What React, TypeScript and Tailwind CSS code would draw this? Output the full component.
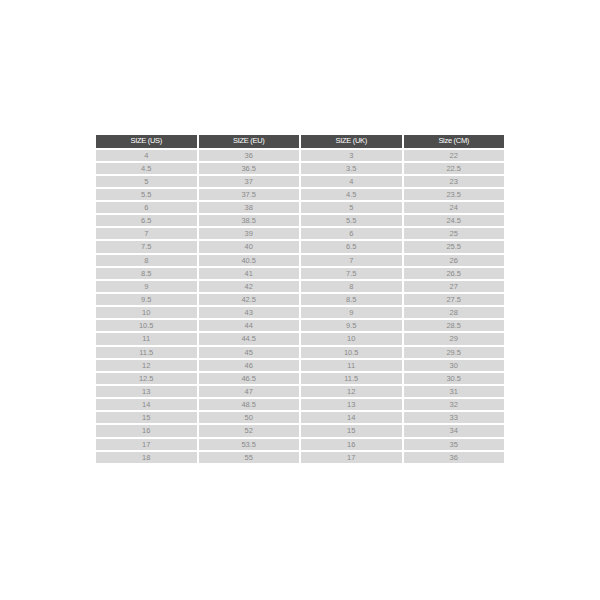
const headers = ["SIZE (US)", "SIZE (EU)", "SIZE (UK)", "Size (CM)"];

const rows: string[][] = [
    ["4", "36", "3", "22"],
    ["4.5", "36.5", "3.5", "22.5"],
    ["5", "37", "4", "23"],
    ["5.5", "37.5", "4.5", "23.5"],
    ["6", "38", "5", "24"],
    ["6.5", "38.5", "5.5", "24.5"],
    ["7", "39", "6", "25"],
    ["7.5", "40", "6.5", "25.5"],
    ["8", "40.5", "7", "26"],
    ["8.5", "41", "7.5", "26.5"],
    ["9", "42", "8", "27"],
    ["9.5", "42.5", "8.5", "27.5"],
    ["10", "43", "9", "28"],
    ["10.5", "44", "9.5", "28.5"],
    ["11", "44.5", "10", "29"],
    ["11.5", "45", "10.5", "29.5"],
    ["12", "46", "11", "30"],
    ["12.5", "46.5", "11.5", "30.5"],
    ["13", "47", "12", "31"],
    ["14", "48.5", "13", "32"],
    ["15", "50", "14", "33"],
    ["16", "52", "15", "34"],
    ["17", "53.5", "16", "35"],
    ["18", "55", "17", "36"],
];

export default function App() {
    return (
        <div className="w-[600px] h-[600px] bg-white pt-[135px] pl-[96px] font-['Liberation_Sans',Arial,sans-serif]">
            <div className="w-[408px] flex flex-col gap-[2px]">
                <div className="grid grid-cols-4 gap-[2px]">
                    {headers.map(h => (
                        <div
                            key={h}
                            className="h-[12.5px] bg-[#4d4d4d] text-white text-[7.5px] leading-[12.5px] text-center tracking-[-0.3px]"
                        >
                            {h}
                        </div>
                    ))}
                </div>
                {rows.map((r, i) => (
                    <div key={i} className="grid grid-cols-4 gap-[2px]">
                        {r.map((c, j) => (
                            <div
                                key={j}
                                className="h-[11.15px] bg-[#d9d9d9] text-[#8a8a8a] text-[7.5px] leading-[11.15px] text-center"
                            >
                                {c}
                            </div>
                        ))}
                    </div>
                ))}
            </div>
        </div>
    );
}
